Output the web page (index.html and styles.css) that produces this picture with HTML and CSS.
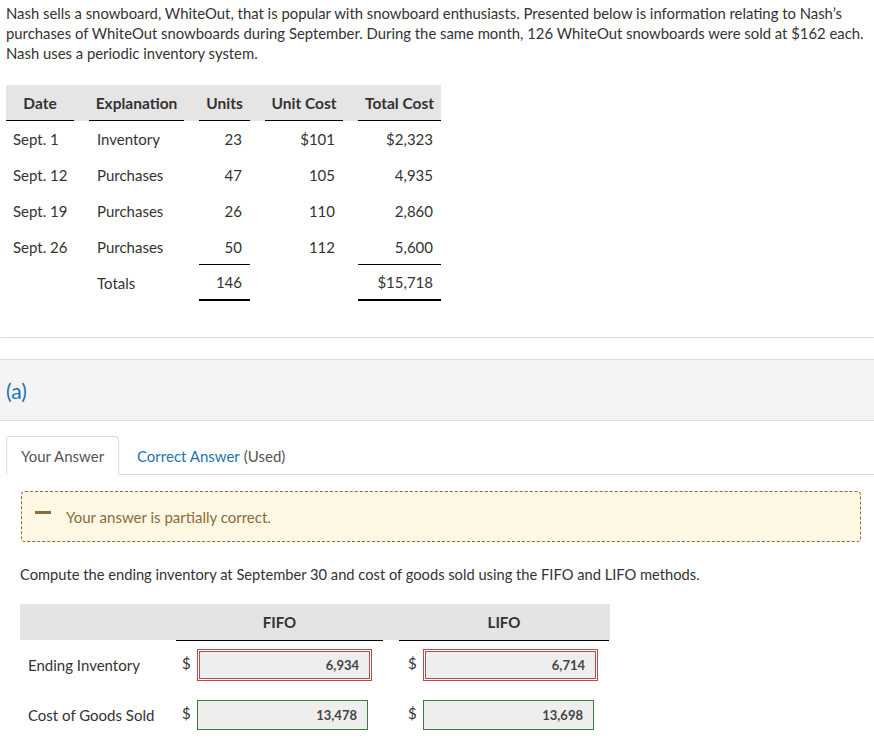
FILE: index.html
```html
<!DOCTYPE html>
<html lang="en">
<head>
<meta charset="utf-8">
<title>Nash – WhiteOut inventory</title>
<link rel="stylesheet" href="styles.css">
</head>
<body>
<div class="page">
  <p class="intro">Nash sells a snowboard, WhiteOut, that is popular with snowboard enthusiasts. Presented below is information relating to Nash’s<br>purchases of WhiteOut snowboards during September. During the same month, 126 WhiteOut snowboards were sold at $162 each.<br>Nash uses a periodic inventory system.</p>

  <div class="inv">
    <div class="inv-grid inv-head">
      <div class="th">Date</div>
      <div class="th">Explanation</div>
      <div class="th">Units</div>
      <div class="th">Unit Cost</div>
      <div class="th">Total Cost</div>
    </div>
    <div class="inv-grid">
      <div class="td date">Sept. 1</div>
      <div class="td expl">Inventory</div>
      <div class="td num">23</div>
      <div class="td num">$101</div>
      <div class="td num">$2,323</div>
    </div>
    <div class="inv-grid">
      <div class="td date">Sept. 12</div>
      <div class="td expl">Purchases</div>
      <div class="td num">47</div>
      <div class="td num">105</div>
      <div class="td num">4,935</div>
    </div>
    <div class="inv-grid">
      <div class="td date">Sept. 19</div>
      <div class="td expl">Purchases</div>
      <div class="td num">26</div>
      <div class="td num">110</div>
      <div class="td num">2,860</div>
    </div>
    <div class="inv-grid">
      <div class="td date">Sept. 26</div>
      <div class="td expl">Purchases</div>
      <div class="td num sub">50</div>
      <div class="td num">112</div>
      <div class="td num sub">5,600</div>
    </div>
    <div class="inv-grid">
      <div class="td date"></div>
      <div class="td expl">Totals</div>
      <div class="td num tot">146</div>
      <div class="td num"></div>
      <div class="td num tot">$15,718</div>
    </div>
  </div>

  <div class="rule"></div>

  <div class="part">(a)</div>

  <div class="tabs">
    <div class="tab active">Your Answer</div>
    <div class="tab"><span class="link">Correct Answer</span> (Used)</div>
  </div>

  <div class="feedback">
    <span class="dash"></span>
    <span class="fb-text">Your answer is partially correct.</span>
  </div>

  <p class="instr">Compute the ending inventory at September 30 and cost of goods sold using the FIFO and LIFO methods.</p>

  <div class="ans">
    <div class="ans-grid ans-head">
      <div class="hc blank"></div>
      <div class="hc">FIFO</div>
      <div class="hc">LIFO</div>
    </div>
    <div class="ans-grid ans-row">
      <div class="label">Ending Inventory</div>
      <div class="cell fifo"><span class="cur">$</span><input class="field bad" type="text" value="6,934" readonly></div>
      <div class="cell lifo"><span class="cur">$</span><input class="field bad" type="text" value="6,714" readonly></div>
    </div>
    <div class="ans-grid ans-row">
      <div class="label">Cost of Goods Sold</div>
      <div class="cell fifo"><span class="cur">$</span><input class="field ok" type="text" value="13,478" readonly></div>
      <div class="cell lifo"><span class="cur">$</span><input class="field ok" type="text" value="13,698" readonly></div>
    </div>
  </div>
</div>
</body>
</html>
```

FILE: styles.css
```css
* { box-sizing: border-box; }

html, body {
  margin: 0;
  padding: 0;
  background: #fff;
}

body {
  font-family: Lato, "Open Sans", "Liberation Sans", sans-serif;
  font-size: 14.7px;
  color: #333;
}

.page {
  width: 874px;
  padding-top: 3px;
}

.intro {
  margin: 0;
  padding-left: 6px;
  line-height: 20px;
  font-size: 14.85px;
  white-space: nowrap;
}

/* inventory table */
.inv {
  margin: 22px 0 0 6px;
  width: 435px;
  font-size: 15px;
}

.inv-grid {
  display: grid;
  grid-template-columns: 68px 95px 51px 78px 83px;
  column-gap: 15px;
}

.inv-head {
  background: #e5e5e5;
}

.th {
  height: 36px;
  border-bottom: 1px solid #000;
  display: flex;
  align-items: center;
  justify-content: center;
  font-weight: bold;
  font-size: 15.5px;
  white-space: nowrap;
}

.td {
  height: 36px;
  display: flex;
  align-items: center;
  white-space: nowrap;
}

.td.date { padding-left: 7px; }
.td.expl { padding-left: 8px; }
.td.num { justify-content: flex-end; padding-right: 8px; }
.td.sub { border-bottom: 1px solid #000; }
.td.tot { border-bottom: 2px solid #000; }

.rule {
  margin-top: 36px;
  height: 1px;
  background: #dcdcdc;
  box-shadow: 0 2px 4px rgba(0, 0, 0, 0.06);
}

.part {
  margin-top: 21px;
  height: 62px;
  background: #f4f4f4;
  border-top: 1px solid #dcdcdc;
  border-bottom: 1px solid #dcdcdc;
  display: flex;
  align-items: center;
  padding-left: 6px;
  color: #1a74b0;
  font-size: 21px;
  font-weight: normal;
}

/* tabs */
.tabs {
  margin: 15px 0 0 6px;
  display: flex;
  border-bottom: 1px solid #dcdcdc;
  font-size: 15px;
}

.tab {
  height: 39px;
  margin-bottom: -1px;
  display: flex;
  align-items: center;
  color: #555;
  padding: 0 14px 0 18px;
  white-space: nowrap;
}

.tab.active {
  width: 113px;
  border: 1px solid #dcdcdc;
  border-bottom-color: #fff;
  border-radius: 4px 4px 0 0;
  background: #fff;
  padding: 0 0 0 14px;
}

.link { color: #1a74b0; margin-right: 4px; }

/* feedback */
.feedback {
  margin: 16px 13px 0 21px;
  height: 51px;
  border: 1px dashed #8a6d3b;
  border-radius: 4px;
  background: #fdf7e3;
  display: flex;
  align-items: center;
  padding-left: 13px;
  font-size: 15px;
}

.dash {
  width: 16px;
  height: 3px;
  background: #8a6d3b;
  margin-right: 15px;
  margin-bottom: 8px;
}

.fb-text { color: #8a6d3b; }

.instr {
  margin: 22px 0 0 20px;
  line-height: 20px;
  white-space: nowrap;
}

/* answer table */
.ans {
  margin: 20px 0 0 20px;
  width: 590px;
  font-size: 15px;
}

.ans-grid {
  display: grid;
  grid-template-columns: 140px 207px 210px;
  column-gap: 16px;
}

.ans-head {
  height: 36px;
  background: #e4e4e4;
}

.hc {
  display: flex;
  align-items: center;
  justify-content: center;
  font-weight: bold;
  box-shadow: 0 1px 0 #000;
}

.hc.blank { box-shadow: none; }

.ans-row {
  height: 50px;
  align-items: center;
}

.label { padding-left: 8px; white-space: nowrap; }

.cell {
  display: flex;
  align-items: center;
  padding-left: 6px;
}

.cell.lifo { padding-left: 9px; }

.cur {
  width: 8px;
  margin-right: 7px;
  font-size: 15px;
  padding-bottom: 4px;
}

.field {
  width: 171px;
  height: 30px;
  margin: 0;
  padding: 0 10px 0 0;
  background: #eeeeee;
  border: 1px solid #3d7b3f;
  border-radius: 0;
  font-family: Lato, "Open Sans", "Liberation Sans", sans-serif;
  font-size: 13px;
  font-weight: bold;
  color: #444;
  text-align: right;
}

.field.bad {
  height: 28px;
  margin-left: 2px;
  border-color: #b94a48;
  outline: 1px solid #b94a48;
  outline-offset: 1px;
}
```
